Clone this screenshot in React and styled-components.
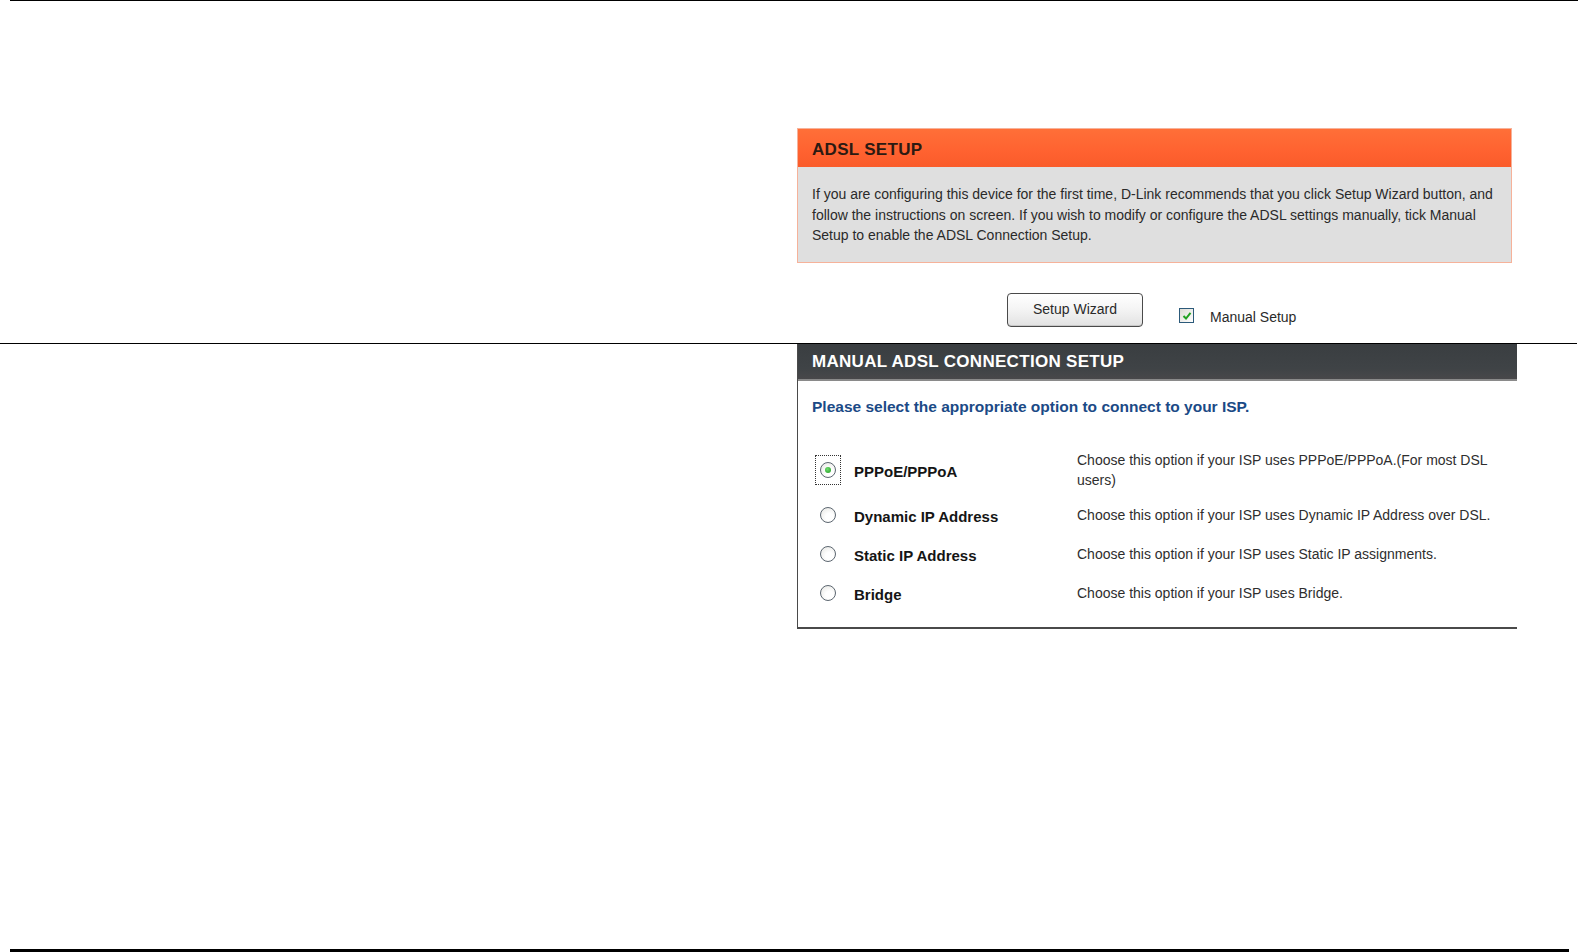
import React from 'react';
import styled, { createGlobalStyle } from 'styled-components';

const GlobalStyle = createGlobalStyle`
  html, body {
    margin: 0;
    padding: 0;
    background: #ffffff;
  }
  body {
    font-family: 'Liberation Sans', Arial, sans-serif;
    color: #222;
  }
`;

const options = [
  {
    id: 'pppoe',
    label: 'PPPoE/PPPoA',
    lines: ['Choose this option if your ISP uses PPPoE/PPPoA.(For most DSL', 'users)'],
    checked: true,
  },
  {
    id: 'dynamic',
    label: 'Dynamic IP Address',
    lines: ['Choose this option if your ISP uses Dynamic IP Address over DSL.'],
  },
  {
    id: 'static',
    label: 'Static IP Address',
    lines: ['Choose this option if your ISP uses Static IP assignments.'],
  },
  {
    id: 'bridge',
    label: 'Bridge',
    lines: ['Choose this option if your ISP uses Bridge.'],
  },
];

const Radio = ({ checked }) => (
  <RadioFocus $focused={checked}>
    <RadioCircle>{checked && <RadioDot />}</RadioCircle>
  </RadioFocus>
);

const App = () => {
  return (
    <Page>
      <GlobalStyle />
      <Rule $left={10} $right={0} $thick={1} />

      <Upper>
        <AdslBox>
          <AdslHeader>ADSL SETUP</AdslHeader>
          <AdslBody>
            If you are configuring this device for the first time, D-Link recommends that you click Setup Wizard button, and
            follow the instructions on screen. If you wish to modify or configure the ADSL settings manually, tick Manual
            Setup to enable the ADSL Connection Setup.
          </AdslBody>
        </AdslBox>

        <Controls>
          <WizardButton type="button">Setup Wizard</WizardButton>
          <CheckGroup>
            <CheckBox>
              <svg width="10" height="10" viewBox="0 0 10 10">
                <polyline points="1.5,5 4,7.5 8.5,1.8" fill="none" stroke="#21a121" strokeWidth="2" />
              </svg>
            </CheckBox>
            <CheckLabel>Manual Setup</CheckLabel>
          </CheckGroup>
        </Controls>
      </Upper>

      <Rule $left={0} $right={1} $thick={1} $top={16} />

      <Lower>
        <ManualPanel>
          <ManualHeader>MANUAL ADSL CONNECTION SETUP</ManualHeader>
          <ManualBody>
            <Prompt>Please select the appropriate option to connect to your ISP.</Prompt>
            <OptionGrid>
              {options.map((opt) => (
                <OptionRow key={opt.id} $tall={opt.lines.length > 1}>
                  <RadioCell>
                    <Radio checked={opt.checked} />
                  </RadioCell>
                  <OptionLabel>{opt.label}</OptionLabel>
                  <OptionDesc>
                    {opt.lines.map((line, i) => (
                      <div key={i}>{line}</div>
                    ))}
                  </OptionDesc>
                </OptionRow>
              ))}
            </OptionGrid>
          </ManualBody>
        </ManualPanel>
      </Lower>

      <Rule $left={10} $right={9} $thick={3} $auto />
    </Page>
  );
};

export default App;

const Page = styled.div`
  width: 1578px;
  height: 952px;
  display: flex;
  flex-direction: column;
  overflow: hidden;
`;

const Rule = styled.div`
  height: ${(p) => p.$thick}px;
  background: #000;
  margin-left: ${(p) => p.$left}px;
  margin-right: ${(p) => p.$right}px;
  margin-top: ${(p) => (p.$auto ? 'auto' : `${p.$top || 0}px`)};
  margin-bottom: ${(p) => p.$bottom || 0}px;
  flex-shrink: 0;
`;

const Upper = styled.div`
  padding-top: 127px;
  padding-left: 797px;
`;

const AdslBox = styled.div`
  width: 713px;
  border: 1px solid #f6b29a;
`;

const AdslHeader = styled.div`
  height: 35px;
  display: flex;
  align-items: center;
  padding: 3px 0 0 14px;
  background: linear-gradient(#ff6f38, #ff6230 60%, #fa5b2a);
  color: #2b1a12;
  font-weight: bold;
  font-size: 17px;
  letter-spacing: 0.3px;
`;

const AdslBody = styled.div`
  background: #dfdfdf;
  padding: 17px 14px 16px 14px;
  font-size: 14px;
  line-height: 20.5px;
  color: #2a2a2a;
`;

const Controls = styled.div`
  display: flex;
  align-items: flex-start;
  margin-top: 30px;
  padding-left: 210px;
  height: 34px;
`;

const WizardButton = styled.button`
  width: 136px;
  height: 34px;
  border: 1px solid #4a4a4a;
  border-radius: 4px;
  background: linear-gradient(#ffffff, #f5f5f5 45%, #e2e2e2);
  box-shadow: inset 0 -1px 0 #c8c8c8;
  font-family: 'Liberation Sans', Arial, sans-serif;
  font-size: 14px;
  color: #2a2a2a;
  padding: 0 0 1px 0;
`;

const CheckGroup = styled.div`
  display: flex;
  align-items: center;
  margin-left: 36px;
  margin-top: 14px;
`;

const CheckBox = styled.span`
  width: 13px;
  height: 13px;
  border: 1px solid #2c5a7a;
  background: linear-gradient(135deg, #dcdcd5, #ffffff);
  display: flex;
  align-items: center;
  justify-content: center;
`;

const CheckLabel = styled.span`
  margin-left: 16px;
  font-size: 14px;
  color: #2a2a2a;
  margin-top: 2px;
`;

const Lower = styled.div`
  padding-left: 797px;
`;

const ManualPanel = styled.div`
  width: 719px;
  border-left: 1px solid #4a4a4a;
  border-bottom: 2px solid #4a4a4a;
`;

const ManualHeader = styled.div`
  height: 33px;
  display: flex;
  align-items: center;
  padding: 2px 0 0 14px;
  background: linear-gradient(#3a3e41, #3f4346 70%, #48484a);
  border-bottom: 2px solid #8a8a8a;
  color: #ffffff;
  font-weight: bold;
  font-size: 17px;
  letter-spacing: 0.3px;
`;

const ManualBody = styled.div`
  padding: 16px 14px 14px 14px;
`;

const Prompt = styled.div`
  font-size: 15.5px;
  line-height: 20px;
  font-weight: bold;
  color: #1b4a86;
`;

const OptionGrid = styled.div`
  margin-top: 28px;
  display: flex;
  flex-direction: column;
`;

const OptionRow = styled.div`
  display: grid;
  grid-template-columns: 42px 223px 1fr;
  align-items: center;
  height: ${(p) => (p.$tall ? 51 : 39)}px;
`;

const RadioCell = styled.div`
  display: flex;
  align-items: center;
`;

const RadioFocus = styled.span`
  display: flex;
  align-items: center;
  justify-content: center;
  width: 24px;
  height: 28px;
  margin-left: 3px;
  border: 1px dotted ${(p) => (p.$focused ? '#333' : 'transparent')};
`;

const RadioCircle = styled.span`
  width: 14px;
  height: 14px;
  border-radius: 50%;
  border: 1px solid #5c6670;
  background: radial-gradient(circle at 60% 65%, #ffffff 30%, #e4e4e0 100%);
  display: flex;
  align-items: center;
  justify-content: center;
`;

const RadioDot = styled.span`
  width: 6px;
  height: 6px;
  border-radius: 50%;
  background: radial-gradient(circle at 40% 35%, #6fdc6f, #1f9a1f);
`;

const OptionLabel = styled.div`
  font-size: 15px;
  font-weight: bold;
  color: #151515;
  padding-top: 3px;
`;

const OptionDesc = styled.div`
  font-size: 14px;
  line-height: 20px;
  color: #2e2e2e;
`;
